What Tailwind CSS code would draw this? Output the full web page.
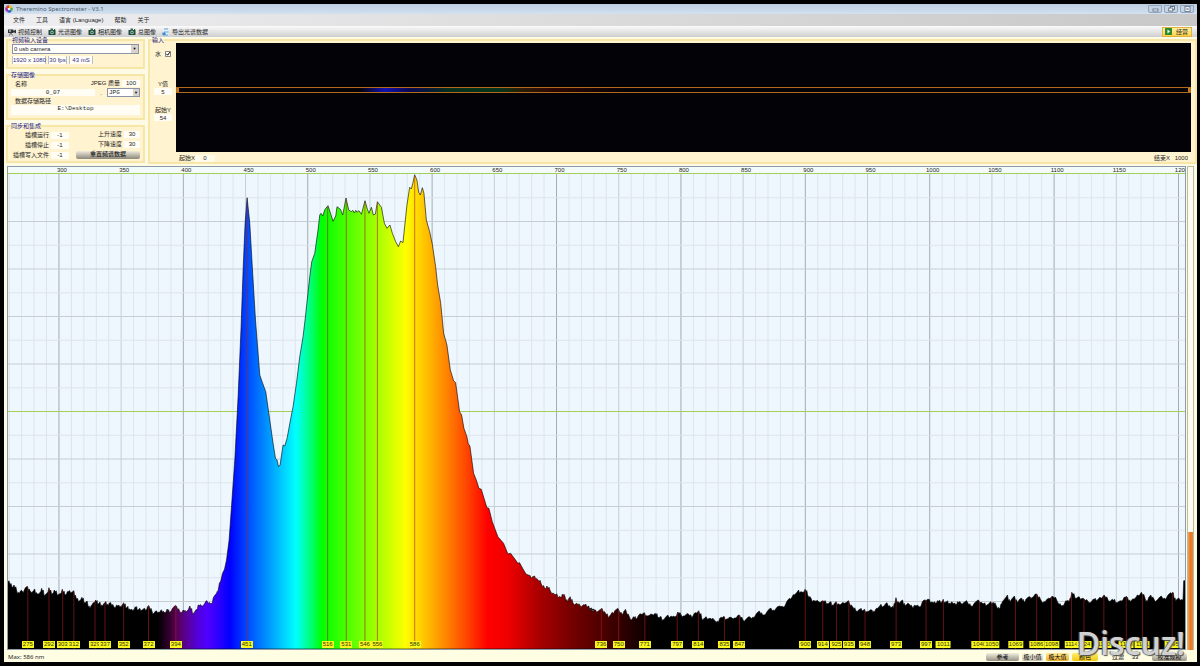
<!DOCTYPE html>
<html lang="zh-CN">
<head>
<meta charset="utf-8">
<title>Theremino Spectrometer - V3.1</title>
<script src="https://cdn.jsdelivr.net/npm/@tailwindcss/browser@4"></script>
</head>
<body class="h-screen overflow-hidden bg-black py-1 pr-[3px] pl-1 font-['Liberation_Sans','Noto_Sans_CJK_SC',sans-serif] text-[6px] leading-[8px] text-neutral-800">
<svg class="hidden">
  <symbol id="camera" viewBox="0 0 16 16"><rect x="1" y="4" width="14" height="10" rx="1" fill="#244c3c"/><rect x="5" y="1" width="5" height="4" fill="#3a6a55"/><circle cx="8" cy="9" r="3.4" fill="#a9c9b8"/><circle cx="8" cy="9" r="1.6" fill="#16382a"/><rect x="12" y="2" width="2.5" height="2" fill="#3a6a55"/></symbol>
</svg>
<main class="relative flex h-full flex-col bg-[#fdfbe6]">
  <header class="flex h-[10px] shrink-0 items-center bg-linear-to-b from-[#bccde0] to-[#d3e1f0] pr-[3px] pl-px">
    <svg class="size-[8px]" viewBox="0 0 16 16" fill="none" stroke-width="5"><path d="M8 3a5 5 0 0 1 4.500 3" stroke="#e8c020"/><path d="M12.500 6a5 5 0 0 1-1 5.500" stroke="#50b040"/><path d="M11.500 11.500a5 5 0 0 1-6 .5" stroke="#3060d0"/><path d="M5.500 12a5 5 0 0 1-2-6" stroke="#a030b0"/><path d="M3.500 6a5 5 0 0 1 4.500-3" stroke="#e04030"/><circle cx="8" cy="8" r="2.200" fill="#fff"/></svg>
    <h1 class="ml-[3px] font-['Noto_Sans',sans-serif] font-normal text-[#4a5a70]">Theremino Spectrometer - V3.1</h1>
    <div class="ml-auto flex gap-[2px]">
      <button aria-label="Minimize" class="flex h-[8px] w-[14px] items-center justify-center rounded-b-[2px] border border-[#93a5bc] bg-[#c3d2e4]"><svg class="h-[5px] w-[7px]" viewBox="0 0 7 5"><rect x="1" y="2" width="5" height="2" fill="#fff" stroke="#5a6a80" stroke-width=".8"/></svg></button>
      <button aria-label="Restore" class="flex h-[8px] w-[14px] items-center justify-center rounded-b-[2px] border border-[#93a5bc] bg-[#c3d2e4]"><svg class="h-[6px] w-[7px]" viewBox="0 0 7 6" fill="#fff" stroke="#5a6a80" stroke-width=".9"><rect x="2.500" y=".5" width="4" height="3"/><rect x=".8" y="2" width="4" height="3"/></svg></button>
      <button aria-label="Close" class="flex h-[8px] w-[14px] items-center justify-center rounded-b-[2px] border border-[#93a5bc] bg-[#c3d2e4]"><svg class="h-[6px] w-[7px]" viewBox="0 0 7 6" fill="#fff" stroke="#5a6a80" stroke-width=".8"><rect x="1" y=".5" width="5" height="5"/><path d="M2.200 1.700l2.600 2.600m0-2.600l-2.600 2.600"/></svg></button>
    </div>
  </header>
  <nav class="flex h-[12px] shrink-0 items-center gap-[11px] bg-linear-to-r from-[#eeeef0] to-[#c8c8c8] pl-[9px]">
    <button>文件</button><button>工具</button><button>语言 (Language)</button><button>帮助</button><button>关于</button>
  </nav>
  <div class="flex h-[11px] shrink-0 items-center bg-linear-to-b from-[#fbfbfb] to-[#cfcfcf] pr-[5px] pl-[4px]">
    <div class="flex gap-[6px] whitespace-nowrap">
      <button class="flex items-center gap-[2px]"><svg class="size-[8px]" viewBox="0 0 16 16"><path d="M0 3h11v7H0z M11 6l5-3v8l-5-3z" fill="#2d3338"/><circle cx="4" cy="6" r="1.800" fill="#ccc"/><path d="M5 10l-2 5m3-5l3 5" stroke="#444" stroke-width="1.500"/></svg>视频控制</button>
      <button class="flex items-center gap-[2px]"><svg class="size-[8px]"><use href="#camera"/></svg>光谱图像</button>
      <button class="flex items-center gap-[2px]"><svg class="size-[8px]"><use href="#camera"/></svg>相机图像</button>
      <button class="flex items-center gap-[2px]"><svg class="size-[8px]"><use href="#camera"/></svg>总图像</button>
      <button class="flex items-center gap-[2px]"><svg class="size-[8px]" viewBox="0 0 16 16"><path d="M4 1h9v14H2v-5" fill="#e8f2fb"/><path d="M4 2h8M4 8h9M2 14h10" stroke="#5aa0d8" stroke-width="2"/><path d="M1 9h6v5H1z" fill="#3b86c8"/></svg>导出光谱数据</button>
    </div>
    <button class="ml-auto flex h-[10px] w-[30px] items-center gap-[4px] border border-[#e0b040] bg-linear-to-b from-[#fff0a0] to-[#ffd23c] pl-[2px]"><svg class="size-[7px]" viewBox="0 0 14 14"><rect width="14" height="14" rx="1" fill="#2a8a30"/><path d="M5 3l5 4-5 4z" fill="#fff"/></svg>经营</button>
  </div>

  <section class="flex h-[127px] shrink-0 gap-[3px] pl-[2px]">
    <div class="flex w-[139px] shrink-0 flex-col gap-[3px]">
      <fieldset class="h-[32px] border-2 border-[#f7e6a6] bg-[#fff3d0] px-[4px]">
        <legend class="leading-[6px] text-[#202080]">视频输入设备</legend>
        <label class="sr-only" for="dev">视频输入设备</label>
        <div class="relative mt-px">
          <select id="dev" class="block h-[10px] w-full appearance-none border border-[#8a93a8] bg-white pl-px leading-[8px]"><option>0 usb camera</option></select>
          <span class="pointer-events-none absolute top-px right-px flex h-[8px] w-[7px] items-center justify-center bg-[#d8d4cc] text-[4px] text-black">▼</span>
        </div>
        <div class="mt-[2px] flex gap-[2px] text-center whitespace-nowrap text-[#303090]">
          <span class="w-[34px] border-x border-[#b8c0d0] bg-[#fffdf4]">1920 x 1080</span><span class="w-[19px] border-x border-[#b8c0d0] bg-[#fffdf4]">30 fps</span><span class="w-[24px] border-x border-[#b8c0d0] bg-[#fffdf4]">43 mS</span>
        </div>
      </fieldset>
      <fieldset class="h-[48px] border-2 border-[#f7e6a6] bg-[#fff3d0] px-[3px]">
        <legend class="leading-[6px] text-[#202080]">存储图像</legend>
        <div class="flex items-center"><label for="nm" class="mt-[2px] pl-[4px]">名称</label><label for="jq" class="ml-auto whitespace-nowrap">JPEG 质量</label><input id="jq" value="100" class="ml-[2px] h-[7px] w-[18px] bg-[#fffdf4] text-center"></div>
        <div class="flex items-center justify-between">
          <input id="nm" value="0_07" class="h-[7px] w-[84px] bg-[#fffdf4] text-center font-['Liberation_Mono',monospace]"><span>.</span>
          <div class="relative"><select aria-label="格式" class="block h-[9px] w-[33px] appearance-none border border-[#8a93a8] bg-white pl-px font-['Liberation_Mono',monospace] leading-[7px]"><option>JPG</option></select><span class="pointer-events-none absolute top-px right-px flex h-[7px] w-[6px] items-center justify-center bg-[#d8d4cc] text-[4px] text-black">▼</span></div>
        </div>
        <label for="pt" class="block pl-[4px]">数据存储路径</label>
        <input id="pt" value="E:\Desktop" class="block h-[10px] w-full bg-[#fffdf4] pb-[3px] text-center font-['Liberation_Mono',monospace]">
      </fieldset>
      <fieldset class="h-[40px] border-2 border-[#f7e6a6] bg-[#fff3d0] px-[3px]">
        <legend class="leading-[6px] text-[#202080]">同步和集成</legend>
        <div class="flex justify-between text-right whitespace-nowrap">
          <div class="mt-[2px] grid grid-cols-[38px_18px] items-center gap-x-[2px] gap-y-[2px]">
            <label for="a">插槽运行</label><input id="a" value="-1" class="h-[7px] bg-[#fffdf4] text-center">
            <label for="b">插槽停止</label><input id="b" value="-1" class="h-[7px] bg-[#fffdf4] text-center">
            <label for="c">插槽写入文件</label><input id="c" value="-1" class="h-[7px] bg-[#fffdf4] text-center">
          </div>
          <div class="mt-px grid grid-cols-[1fr_16px] items-center gap-x-[2px] gap-y-[2px]">
            <label for="d" class="pl-[22px]">上升速度</label><input id="d" value="30" class="h-[7px] bg-[#fffdf4] text-center">
            <label for="e">下降速度</label><input id="e" value="30" class="h-[7px] bg-[#fffdf4] text-center">
            <button class="col-span-2 h-[8px] rounded-[2px] bg-linear-to-b from-[#f0ecdc] to-[#8c887c] text-center leading-[7px] text-black">重置频谱数据</button>
          </div>
        </div>
      </fieldset>
    </div>
    <fieldset class="min-w-0 flex-1 border-2 border-[#f7e6a6] bg-[#fff3d0] pr-[4px]">
      <legend class="ml-[2px] leading-[6px] text-[#202080]">输入</legend>
      <div class="flex h-[120px] w-full">
        <div class="flex w-[26px] shrink-0 flex-col items-center text-center">
          <label class="mt-[7px] flex items-center gap-[4px]">水<input type="checkbox" checked class="sr-only"><svg class="size-[6px]" viewBox="0 0 6 6"><path d="M.5.5h5v5h-5z" fill="#fff" stroke="#555" stroke-width=".7"/><path d="M1.300 2.800l1.300 1.400 2.200-3" fill="none" stroke="#000" stroke-width="1"/></svg></label>
          <label for="y" class="mt-[22px]">Y值</label><input id="y" value="5" class="h-[7px] w-[18px] bg-[#fffdf4] text-center">
          <label for="sy" class="mt-[11px]">起始Y</label><input id="sy" value="54" class="h-[7px] w-[18px] bg-[#fffdf4] text-center">
        </div>
        <div class="min-w-0 flex-1">
          <div class="h-[109px] bg-[#020207] pt-[44px]">
            <div class="flex h-[6px] justify-between border border-[#b46a1c] bg-[linear-gradient(90deg,transparent_18%,#1010b0_20.500%,#080850_23%,#04301c_27%,#06351a_32%,#2a1c08_34%,#2c0804_37%,transparent_45%)]"><i class="w-[2px] bg-[#c8781e]"></i><i class="w-[2px] bg-[#c8781e]"></i></div>
          </div>
          <div class="mt-[2px] flex items-center px-[3px]"><label for="sx">起始X</label><input id="sx" value="0" class="h-[7px] w-[20px] bg-[#fffaea] text-center"><label for="ex" class="ml-auto">结束X</label><input id="ex" value="1000" class="h-[7px] w-[18px] text-right"></div>
        </div>
      </div>
    </fieldset>
  </section>

  <section class="mt-[2px] flex min-h-0 flex-1 gap-px pr-[3px] pl-[3px]">
    <div class="flex min-w-0 flex-1 flex-col overflow-hidden border border-[#8c9ca8] bg-[#eef7fe]">
      <div id="axis" class="relative h-[7px] shrink-0 border-b border-[#a4d058] bg-[#f2fbfa] leading-[7px]"></div>
      <div id="plot" class="relative min-h-0 flex-1">
        <svg class="absolute inset-0 size-full" viewBox="8 174 1178 475" preserveAspectRatio="none">
          <defs>
            <linearGradient id="spec" gradientUnits="userSpaceOnUse" x1="8" x2="1186" y1="0" y2="0"></linearGradient>
            <clipPath id="under"><path id="clip"/></clipPath>
          </defs>
          <g id="grid" shape-rendering="crispEdges"></g>
          <path id="curve" fill="url(#spec)" stroke="#000" stroke-opacity=".75" stroke-width=".8"/>
          <g id="lines" clip-path="url(#under)" stroke="#a82020" stroke-opacity=".6" stroke-width="1"></g>
        </svg>
      </div>
    </div>
    <div class="flex w-[7px] flex-col justify-end border-x border-t border-[#b8bca0] bg-[#fdfbf0]"><div class="h-[118px] bg-linear-to-r from-[#f0a060] via-[#e87820] to-[#e88838]"></div></div>
  </section>

  <footer class="flex h-[12px] shrink-0 items-center bg-[#fffde2] pt-[2px] pr-[10px] pl-[4px]">
    <output class="font-['Noto_Sans',sans-serif]">Max: 586 nm</output>
    <div class="ml-auto flex items-center gap-[3px] text-center leading-[7px] whitespace-nowrap text-black">
      <button class="h-[8px] w-[33px] rounded-[2px] bg-linear-to-b from-[#f4f0e0] to-[#969286]">参考</button>
      <button class="h-[8px] w-[21px] rounded-[2px] bg-linear-to-b from-[#faf6e4] to-[#c4c0b0]">极小值</button>
      <button class="h-[8px] w-[23px] rounded-[2px] bg-linear-to-b from-[#ffe890] to-[#eab020]">极大值</button>
      <button class="h-[8px] w-[26px] rounded-[2px] bg-linear-to-b from-[#fff060] to-[#f4c800]">颜色</button>
      <label for="flt" class="ml-[11px]">过滤</label><input id="flt" value="33" class="h-[7px] w-[16px] text-center">
      <button class="ml-[6px] h-[8px] w-[35px] rounded-[2px] bg-linear-to-b from-[#f4f0e0] to-[#969286]">校准规模</button>
    </div>
  </footer>
  <div class="pointer-events-none absolute right-[12px] bottom-[3px] font-['Open_Sans',sans-serif] text-[32px] leading-[32px] font-semibold text-[#dadada]/95 [text-shadow:1px_1px_1px_#555,-1px_0_1px_#666]">Discuz!</div>
</main>
<script>
const NS = 'http://www.w3.org/2000/svg';
const X = nm => 59 + (nm - 300) * 1.245;
const pct = x => (x - 8) / 1178 * 100 + '%';
const $ = id => document.getElementById(id);

// Intensity samples: [origin x, origin y, "x,y ..."] in thirds of a plot unit
const bands = [
 [0,560,"22,70 28,65 35,78 42,75 50,92 58,100 66,92 70,98 75,85 83,80 90,92 95,98 104,87 112,102 117,102 125,85 132,105 138,103 147,83 155,103 163,90 172,105 178,102 187,88 195,105 202,95 212,98 222,92 228,112 235,124 246,112 252,128 262,124 270,145 280,128 287,120 293,133 300,126 308,137 318,125 325,138 332,128 342,140 350,135 360,141 371,128 378,145 384,139 390,148 398,152 406,140 412,150 420,145 428,149 435,146 441,148 447,137 457,155 463,158 470,153 480,157 486,152 492,157 502,147 508,157 518,145 530,139 540,155 550,150 558,157 570,138 578,163 588,150 595,135 605,138 615,130 622,124 633,132 640,115 650,100 657,80 663,62 668,40 674,28 680,0 688,-60"],
 [210,320,"75,420 85,230 94,20"],
 [200,160,"130,330 136,190 142,113 150,190 158,330 167,480"],
 [210,320,"150,165 157,185 168,215 180,300 190,370 197,415 202,420 206,440 211,435 220,375 225,378 232,355 242,300 250,260 260,190 270,110 280,50"],
 [200,160,"316,480 330,350 336,305 345,280 355,210 360,165 364,160 369,168 376,148 385,137 391,155 400,184 408,168 412,140 422,148 429,165 439,114 447,150 455,155 459,151 464,159 468,151 472,157 478,152 485,163 496,122 503,148 508,160 515,142 521,165 527,162 533,125 545,142 554,190 562,205 571,195 578,220 588,245 596,260 603,243 610,248 622,135 630,82 635,87 640,68 645,44 652,60 657,97 662,105 668,83 673,100 680,180 690,215 698,253 708,320 714,375"],
 [400,160,"123,428 132,520 142,555 152,630 162,662 168,668 180,755 186,765 193,805 202,830 206,852 211,858 222,940 230,960 234,972 238,985 245,988 262,1043 268,1045 278,1085 295,1130 312,1150 325,1182 333,1180"],
 [300,560,"648,0 655,10 660,8 672,30 680,43 692,47 700,50 705,48 715,60 725,72 735,83 742,78 752,92 765,103 775,110 782,110 788,103 796,108 805,127 812,110 820,128 832,130 842,138 852,134 862,140 868,138 875,150 885,150"],
 [590,560,"0,145 8,152 18,150 28,152 38,146 48,160 56,173 68,157 76,152 86,146 100,165 108,148 122,177 132,170 139,175 145,170 155,163 165,158 175,168 188,163 197,160 205,172 215,170 223,180 235,165 240,173 245,168 255,170 265,156 275,165 285,168 298,163 305,167 312,165 318,158 328,152 338,180 350,170 362,175 375,180 388,185 395,172 405,170 412,178 425,172 440,174 451,166 460,178 470,178 480,170 495,172 510,153 520,165 535,152 545,145 555,152 572,138 580,140 590,130 600,115 608,112 615,105 628,90 635,95 640,97 647,88 655,105 665,115 675,122 688,125 700,122 712,132 725,125 732,137 740,125 752,135 765,130 778,122 790,140 800,153 810,148 818,152 826,148 835,155 848,150 856,155 865,145 875,133 885,138 893,128 905,143 912,145"],
 [890,560,"20,113 30,130 40,120 48,138 60,132 68,139 75,136 90,140 97,133 105,120 120,118 130,127 138,129 145,122 155,130 162,118 170,127 175,122 183,133 190,128 198,131 205,125 215,130 225,127 235,127 245,137 255,130 268,120 280,130 290,137 305,125 312,127 320,135 332,147 340,125 355,105 363,125 376,108 385,128 398,115 404,123 410,118 422,110 432,112 443,102 455,120 468,125 478,115 490,108 505,125 517,138 530,122 540,125 548,97 558,115 570,110 582,115 600,128 612,118 622,122 632,112 645,105 658,122 670,118 680,128 695,122 705,112 715,112 725,125 735,118 745,105 757,97 768,115 775,125 785,105 795,118 805,120 817,108 830,118 845,98 853,98 860,122 870,115 882,120 884,62 888,62"]
];
const raw = bands.flatMap(([ox, oy, s]) => s.split(' ').map(p => { const [a, b] = p.split(','); return [ox + a / 3, oy + b / 3]; }));
// Sensor noise between samples along the low-signal floor
const pts = raw.flatMap(([x, y], i) => {
  const q = raw[i + 1];
  if (!q || y < 575 || q[0] - x < 2) return [[x, y]];
  const m = (x + q[0]) / 2, h = (y + q[1]) / 2 + (i * 7 % 5 - 1) * .7;
  return [[x, y], [m - .4, h], [m + .5, h - 1]];
}).map(p => p.map(v => v.toFixed(1)).join(' '));
const d = 'M8 649L' + pts.join('L') + 'V649Z';
$('curve').setAttribute('d', d); $('clip').setAttribute('d', d);

for (const [x, c] of [[158,'#000'],[168,'#2c0028'],[176,'#560050'],[187,'#5b0098'],[197,'#5200d8'],[207,'#5000ff'],[218,'#3000ff'],[230,'#0000ff'],[247,'#0048ff'],[270,'#009cff'],[296,'#00ffff'],[310,'#00ff80'],[322,'#00ff00'],[330,'#18ff00'],[365,'#80ff00'],[406,'#ffff00'],[418,'#ffd800'],[440,'#ff9800'],[465,'#ff4c00'],[488,'#ff0000'],[508,'#f00000'],[540,'#a80000'],[570,'#780000'],[600,'#500000'],[625,'#2c0000'],[655,'#000']]) {
  const s = document.createElementNS(NS, 'stop');
  s.setAttribute('offset', (x - 8) / 1178); s.setAttribute('stop-color', c); $('spec').append(s);
}
const line = (g, x1, y1, x2, y2, c) => {
  const l = document.createElementNS(NS, 'line');
  Object.entries({x1, y1, x2, y2}).forEach(([k, v]) => l.setAttribute(k, v));
  if (c) l.setAttribute('stroke', c);
  g.append(l);
};
for (let n = 260; n <= 1200; n += 10) line($('grid'), X(n), 174, X(n), 649, n % 100 ? n % 50 ? '#dde5ea' : '#c6ced4' : '#a4acb2');
for (let i = 1; i < 20; i++) line($('grid'), 8, 174 + i * 23.75, 1186, 174 + i * 23.75, i === 10 ? '#a4d058' : i % 2 ? '#dde5ea' : '#c6ced4');
for (let n = 300; n <= 1200; n += 50) {
  const t = document.createElement('span');
  t.className = 'absolute top-0 ml-[3px] -translate-x-1/2';
  t.style.left = pct(X(n)); t.textContent = n; $('axis').append(t);
}
for (const n of [275,292,303,312,329,337,352,372,394,451,516,531,546,556,586,736,750,771,797,814,835,847,900,914,925,935,948,973,997,1011,1040,1050,1069,1086,1098,1114,1124,1140,1158,1171,1195]) {
  line($('lines'), X(n), 174, X(n), 649);
  const t = document.createElement('span');
  t.className = 'absolute bottom-px -translate-x-1/2 bg-[#f8f820] px-px leading-[7px] text-[#303000]';
  t.style.left = pct(X(n)); t.textContent = n; $('plot').append(t);
}
</script>
</body>
</html>
